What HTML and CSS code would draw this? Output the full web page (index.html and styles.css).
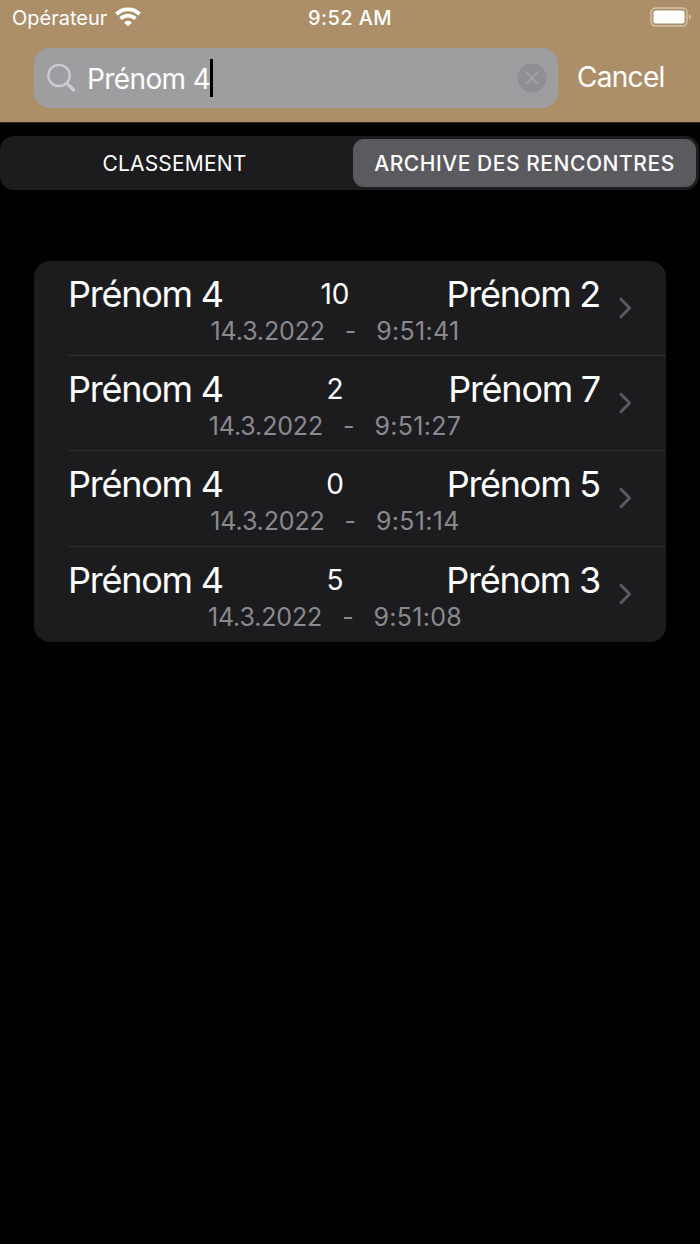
FILE: index.html
```html
<!DOCTYPE html>
<html lang="fr">
<head>
    <meta charset="UTF-8">
    <meta name="viewport" content="width=device-width, initial-scale=1.0">
    <title>Archive des rencontres</title>
    <link rel="stylesheet" href="styles.css">
</head>
<body>
    <header class="header">
        <div class="status-bar">
            <div class="status-left">
                <span class="carrier">Opérateur</span>
                <svg class="wifi" width="26" height="20" viewBox="0 0 26 20">
                    <path d="M1.4 7.2a16.4 16.4 0 0 1 23.2 0" fill="none" stroke="#fff" stroke-width="3.8"/>
                    <path d="M5.6 11.7a10.5 10.5 0 0 1 14.8 0" fill="none" stroke="#fff" stroke-width="3.6"/>
                    <path d="M13 19.6l-4-4.2a5.7 5.7 0 0 1 8 0z" fill="#fff"/>
                </svg>
            </div>
            <span class="clock">9:52 AM</span>
            <div class="status-right">
                <svg width="42" height="20" viewBox="0 0 42 20">
                    <rect x="1" y="1" width="36" height="18" rx="4.5" fill="none" stroke="#d3c2ab" stroke-width="1.5"/>
                    <rect x="3.4" y="3.4" width="31.2" height="13.2" rx="2.4" fill="#fff"/>
                    <path d="M39 7c2.4 1 2.4 5 0 6z" fill="#d3c2ab"/>
                </svg>
            </div>
        </div>
        <div class="search-row">
            <div class="search-field">
                <svg class="search-icon" width="30" height="30" viewBox="0 0 30 30">
                    <circle cx="12" cy="12.5" r="10.7" fill="none" stroke="#cbcbd2" stroke-width="2.3"/>
                    <path d="M20 20.4l6.6 6.6" stroke="#cbcbd2" stroke-width="3.4" stroke-linecap="round"/>
                </svg>
                <span class="search-text">Prénom 4</span>
                <span class="caret"></span>
                <svg class="clear" width="30" height="30" viewBox="0 0 30 30">
                    <circle cx="15" cy="15" r="14.5" fill="#8e8e93"/>
                    <path d="M10 10l10 10M20 10L10 20" stroke="#a2a2a5" stroke-width="2.2" stroke-linecap="round"/>
                </svg>
            </div>
            <span class="cancel">Cancel</span>
        </div>
    </header>

    <nav class="segments">
        <div class="segment">CLASSEMENT</div>
        <div class="segment selected">ARCHIVE DES RENCONTRES</div>
    </nav>

    <main class="matches">
        <div class="match">
            <div class="match-info">
                <div class="players"><span>Prénom 4</span><span class="score">10</span><span class="opponent">Prénom 2</span></div>
                <div class="date"><span>14.3.2022</span><span>-</span><span class="time">9:51:41</span></div>
            </div>
            <svg class="chevron" width="16" height="24" viewBox="0 0 16 24"><path d="M3 3.2l8.6 8.8L3 20.8" /></svg>
        </div>
        <div class="match">
            <div class="match-info">
                <div class="players"><span>Prénom 4</span><span class="score">2</span><span class="opponent">Prénom 7</span></div>
                <div class="date"><span>14.3.2022</span><span>-</span><span class="time">9:51:27</span></div>
            </div>
            <svg class="chevron" width="16" height="24" viewBox="0 0 16 24"><path d="M3 3.2l8.6 8.8L3 20.8" /></svg>
        </div>
        <div class="match">
            <div class="match-info">
                <div class="players"><span>Prénom 4</span><span class="score">0</span><span class="opponent">Prénom 5</span></div>
                <div class="date"><span>14.3.2022</span><span>-</span><span class="time">9:51:14</span></div>
            </div>
            <svg class="chevron" width="16" height="24" viewBox="0 0 16 24"><path d="M3 3.2l8.6 8.8L3 20.8" /></svg>
        </div>
        <div class="match">
            <div class="match-info">
                <div class="players"><span>Prénom 4</span><span class="score">5</span><span class="opponent">Prénom 3</span></div>
                <div class="date"><span>14.3.2022</span><span>-</span><span class="time">9:51:08</span></div>
            </div>
            <svg class="chevron" width="16" height="24" viewBox="0 0 16 24"><path d="M3 3.2l8.6 8.8L3 20.8" /></svg>
        </div>
    </main>
</body>
</html>
```
FILE: styles.css
```css
* {
    box-sizing: border-box;
}
body {
    margin: 0;
    min-height: 1244px;
    background: #000;
    color: #fff;
    font-family: Inter, Roboto, sans-serif;
}
svg {
    display: block;
    flex: none;
}
span {
    white-space: nowrap;
}

/* Header */
.header {
    height: 122px;
    background: #ac8f68;
    box-shadow: 0 1px 0 #2b2620;
}
.status-bar {
    display: grid;
    grid-template-columns: 1fr auto 1fr;
    align-items: center;
    height: 36px;
    padding: 0 8px 0 12px;
    font-size: 20px;
    line-height: 36px;
}
.status-left {
    display: flex;
    align-items: center;
    gap: 8px;
}
.wifi {
    margin-top: -3px;
}
.clock {
    padding-right: 4px;
    font-weight: 500;
    letter-spacing: 0.4px;
}
.status-right {
    display: flex;
    justify-content: flex-end;
    margin-top: -2px;
}
.search-row {
    display: flex;
    align-items: center;
    gap: 19px;
    padding: 12px 0 0 34px;
}
.search-field {
    display: flex;
    align-items: center;
    width: 524px;
    height: 60px;
    padding: 0 11px 0 13px;
    border-radius: 16px;
    background: #9e9ea0;
    font-size: 28px;
}
.search-text {
    margin-left: 10px;
    padding-top: 1px;
    letter-spacing: -0.6px;
}
.caret {
    width: 3px;
    height: 38px;
    background: #000;
}
.clear {
    margin-left: auto;
}
.cancel {
    margin-top: -2px;
    font-size: 28px;
    letter-spacing: -0.7px;
}

/* Segmented control */
.segments {
    display: flex;
    width: 699px;
    height: 54px;
    margin-top: 14px;
    padding: 3px;
    border-radius: 14px;
    background: #1c1c1e;
}
.segment {
    width: 343px;
    border-radius: 11px;
    font-size: 21px;
    line-height: 49px;
    letter-spacing: 0.2px;
    text-align: center;
}
.segment.selected {
    margin-left: 7px;
    background: #5b5a5f;
    font-weight: 500;
    letter-spacing: 0.55px;
}

/* Match list */
.matches {
    margin: 71px 34px 0;
    border-radius: 16px;
    background: #1c1c1e;
}
.match {
    display: flex;
    align-items: center;
    height: 95.2px;
    margin-left: 34px;
    padding-right: 32px;
}
.match:not(:last-child) {
    border-bottom: 1px solid #303033;
}
.match-info {
    width: 534px;
    padding-top: 2px;
}
.players {
    display: grid;
    grid-template-columns: 1fr auto 1fr;
    align-items: center;
    font-size: 36px;
    line-height: 44px;
    letter-spacing: -1.25px;
}
.score {
    font-size: 28px;
    letter-spacing: 0;
}
.opponent {
    padding-right: 2px;
    text-align: right;
}
.date {
    display: flex;
    justify-content: center;
    gap: 20px;
    color: #8a8a8e;
    font-size: 25px;
    line-height: 30px;
    letter-spacing: -0.15px;
}
.time {
    letter-spacing: 0.3px;
}
.chevron {
    margin-left: auto;
    fill: none;
    stroke: #5b5b5f;
    stroke-width: 3;
    stroke-linecap: round;
    stroke-linejoin: round;
}
```
